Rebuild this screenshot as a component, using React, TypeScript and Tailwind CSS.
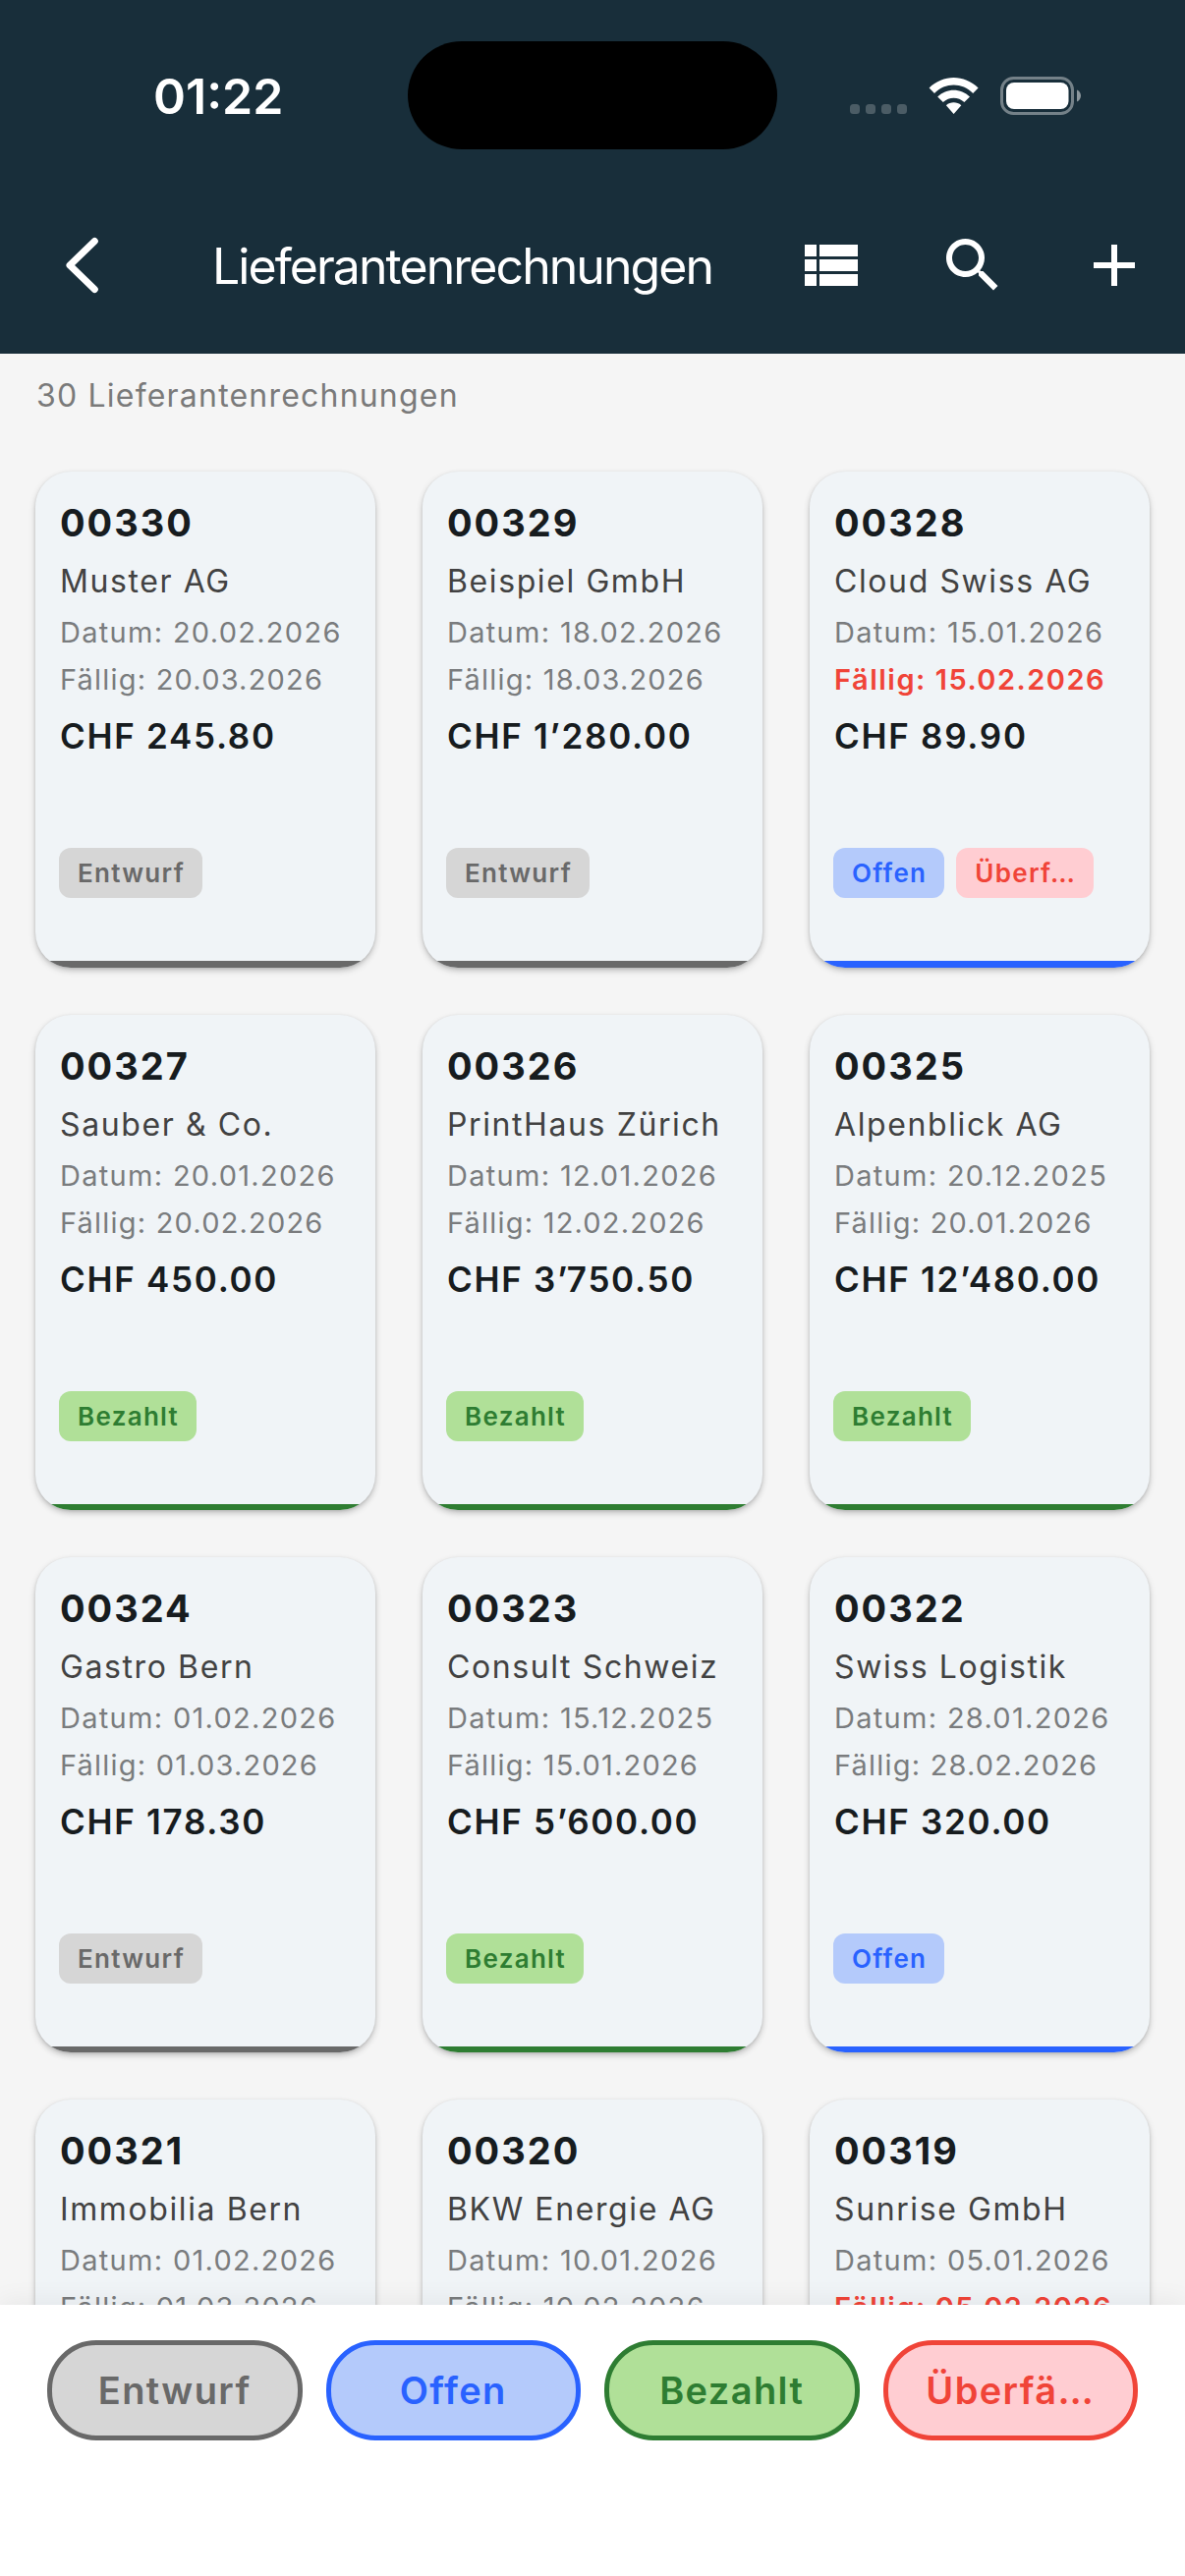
import { cva } from "class-variance-authority";
import { clsx } from "clsx";

type Status = "draft" | "open" | "paid" | "overdue";

type Invoice = {
	number: string;
	supplier: string;
	date: string;
	due: string;
	amount: string;
	status: Status;
	overdue?: boolean;
};

const INVOICES: Invoice[] = [
	{ number: "00330", supplier: "Muster AG", date: "20.02.2026", due: "20.03.2026", amount: "245.80", status: "draft" },
	{ number: "00329", supplier: "Beispiel GmbH", date: "18.02.2026", due: "18.03.2026", amount: "1’280.00", status: "draft" },
	{ number: "00328", supplier: "Cloud Swiss AG", date: "15.01.2026", due: "15.02.2026", amount: "89.90", status: "open", overdue: true },
	{ number: "00327", supplier: "Sauber & Co.", date: "20.01.2026", due: "20.02.2026", amount: "450.00", status: "paid" },
	{ number: "00326", supplier: "PrintHaus Zürich", date: "12.01.2026", due: "12.02.2026", amount: "3’750.50", status: "paid" },
	{ number: "00325", supplier: "Alpenblick AG", date: "20.12.2025", due: "20.01.2026", amount: "12’480.00", status: "paid" },
	{ number: "00324", supplier: "Gastro Bern", date: "01.02.2026", due: "01.03.2026", amount: "178.30", status: "draft" },
	{ number: "00323", supplier: "Consult Schweiz", date: "15.12.2025", due: "15.01.2026", amount: "5’600.00", status: "paid" },
	{ number: "00322", supplier: "Swiss Logistik", date: "28.01.2026", due: "28.02.2026", amount: "320.00", status: "open" },
	{ number: "00321", supplier: "Immobilia Bern", date: "01.02.2026", due: "01.03.2026", amount: "1’850.00", status: "open" },
	{ number: "00320", supplier: "BKW Energie AG", date: "10.01.2026", due: "10.02.2026", amount: "412.60", status: "paid" },
	{ number: "00319", supplier: "Sunrise GmbH", date: "05.01.2026", due: "05.02.2026", amount: "129.00", status: "open", overdue: true },
];

const STATUS_LABELS: Record<Status, string> = {
	draft: "Entwurf",
	open: "Offen",
	paid: "Bezahlt",
	overdue: "Überf…",
};

const FILTERS: { status: Status; label: string }[] = [
	{ status: "draft", label: "Entwurf" },
	{ status: "open", label: "Offen" },
	{ status: "paid", label: "Bezahlt" },
	{ status: "overdue", label: "Überfä…" },
];

const badgeVariants = cva(
	"flex h-[51px] items-center rounded-xl pr-[18px] pl-[19px] text-[26px] font-semibold tracking-[1.3px] whitespace-nowrap",
	{
		variants: {
			status: {
				draft: "bg-[#d6d6d6] text-[#696969]",
				open: "bg-[#b4cafb] text-[#2962ff]",
				paid: "bg-[#b0e098] text-[#2e7d32]",
				overdue: "bg-[#ffcdd2] text-[#f04438]",
			},
		},
	},
);

const filterVariants = cva(
	"flex h-[102px] flex-1 items-center justify-center rounded-[50px] border-5 text-[38px] font-semibold tracking-[1.4px] whitespace-nowrap",
	{
		variants: {
			status: {
				draft: "border-[#696969] bg-[#d6d6d6] text-[#696969]",
				open: "border-[#2962ff] bg-[#b4cafb] text-[#2962ff]",
				paid: "border-[#2e7d32] bg-[#b0e098] text-[#2e7d32]",
				overdue: "border-[#f04438] bg-[#ffcdd2] text-[#f04438]",
			},
		},
	},
);

const barVariants = cva("h-[6.4px] w-full shrink-0", {
	variants: {
		status: {
			draft: "bg-[#696969]",
			open: "bg-[#2962ff]",
			paid: "bg-[#2e7d32]",
			overdue: "bg-[#f04438]",
		},
	},
});

const StatusBar = () => (
	<div className="flex h-[210px] items-start pl-[156px]">
		<div className="flex h-[196px] w-[259px] shrink-0 items-center text-[50px] font-semibold">
			01:22
		</div>
		<div className="mt-[42px] h-[110px] w-[376px] shrink-0 rounded-full bg-black" />
		<svg className="mt-[72px] ml-[74px] h-12 w-[236px] shrink-0" viewBox="865 72 236 48" fill="white">
			<g opacity="0.22">
				<rect x="865" y="106" width="10" height="10" rx="3.5" />
				<rect x="881" y="106" width="10" height="10" rx="3.5" />
				<rect x="897" y="106" width="10" height="10" rx="3.5" />
				<rect x="913" y="106" width="10" height="10" rx="3.5" />
			</g>
			<path d="M945.6 89.6C959.6 75.5 981.6 75.5 995.6 89.6L990.2 95C979.2 83.8 962 83.8 951 95Z" />
			<path d="M954.2 98.4C963.4 89.4 977.8 89.4 987 98.4L981.4 104C975.2 98.2 966 98.2 959.8 104Z" />
			<path d="M962.9 107.2C967.3 103.4 973.9 103.4 978.3 107.2L970.6 116Z" />
			<rect x="1019.5" y="79.5" width="72" height="36" rx="12" fill="none" stroke="white" strokeOpacity="0.4" strokeWidth="3" />
			<rect x="1024" y="84" width="63.5" height="27" rx="8" />
			<path d="M1096 91.5C1098.6 92.7 1100 95 1100 97.5S1098.6 102.3 1096 103.5Z" opacity="0.5" />
		</svg>
	</div>
);

const AppBar = () => (
	<div className="flex h-[120px] items-center pr-9 pl-[60px]">
		<button aria-label="Zurück" className="w-[156px] shrink-0">
			<svg className="h-[60px] w-12" viewBox="0 0 48 60" fill="none" stroke="white" strokeWidth="7" strokeLinecap="round" strokeLinejoin="round">
				<path d="M36.3 5.5L11 30L36.3 54.5" />
			</svg>
		</button>
		<h1 className="mt-0.5 flex-1 text-[50px] tracking-[-1.95px] whitespace-nowrap">
			Lieferantenrechnungen
		</h1>
		<div className="flex shrink-0 gap-[72px]">
			<button aria-label="Liste">
				<svg className="size-[72px]" viewBox="0 0 24 24" fill="white">
					<path d="M3 14h4v-4H3v4zm0 5h4v-4H3v4zM3 9h4V5H3v4zm5 5h13v-4H8v4zm0 5h13v-4H8v4zM8 5v4h13V5H8z" />
				</svg>
			</button>
			<button aria-label="Suchen">
				<svg className="size-[72px]" viewBox="0 0 24 24" fill="white">
					<path d="M15.5 14h-.79l-.28-.27C15.41 12.59 16 11.11 16 9.5 16 5.91 13.09 3 9.5 3S3 5.91 3 9.5 5.91 16 9.5 16c1.61 0 3.09-.59 4.23-1.57l.27.28v.79l5 4.99L20.49 19l-4.99-5zm-6 0C7.01 14 5 11.99 5 9.5S7.01 5 9.5 5 14 7.01 14 9.5 11.99 14 9.5 14z" />
				</svg>
			</button>
			<button aria-label="Hinzufügen">
				<svg className="size-[72px]" viewBox="0 0 24 24" fill="white">
					<path d="M19 13h-6v6h-2v-6H5v-2h6V5h2v6h6v2z" />
				</svg>
			</button>
		</div>
	</div>
);

const InvoiceCard = ({ invoice }: { invoice: Invoice }) => (
	<article className="flex h-[504.4px] flex-col overflow-hidden rounded-[36px] bg-[#f0f4f7] whitespace-nowrap shadow-[0_3px_6px_rgba(0,0,0,0.22),0_1px_3px_rgba(0,0,0,0.1)]">
		<div className="flex-1 px-6 pt-6">
			<div className="pl-px">
				<h2 className="text-[38px] leading-[57px] font-bold tracking-[2px] text-[#171c1f]">
					{invoice.number}
				</h2>
				<p className="mt-[7px] text-[32px] leading-[48px] tracking-[1.6px] text-[#424242]">
					{invoice.supplier}
				</p>
				<p className="mt-[5px] text-[29px] leading-[46px] tracking-[1.3px] text-[#7a7c7e]">
					Datum: {invoice.date}
				</p>
				<p
					className={clsx(
						"mt-0.5 text-[29px] leading-[46px]",
						invoice.overdue
							? "font-semibold tracking-[1.5px] text-[#f04438]"
							: "tracking-[1.2px] text-[#7a7c7e]",
					)}
				>
					Fällig: {invoice.due}
				</p>
				<p className="mt-[7px] text-[35px] leading-[54px] font-semibold tracking-[1.7px] text-[#171c1f]">
					CHF {invoice.amount}
				</p>
			</div>
			<div className="mt-[87px] flex gap-3">
				<span className={badgeVariants({ status: invoice.status })}>
					{STATUS_LABELS[invoice.status]}
				</span>
				{invoice.overdue && (
					<span className={badgeVariants({ status: "overdue" })}>
						{STATUS_LABELS.overdue}
					</span>
				)}
			</div>
		</div>
		<div className={barVariants({ status: invoice.status })} />
	</article>
);

const App = () => (
	<div className="flex h-[2622px] w-[1206px] flex-col overflow-hidden bg-[#f5f5f5] font-['Inter','Liberation_Sans',sans-serif]">
		<header className="h-[360px] shrink-0 bg-[#182e3a] text-white">
			<StatusBar />
			<AppBar />
		</header>

		<main className="min-h-0 flex-1 overflow-hidden px-9">
			<p className="pt-[19px] pl-px text-[32px] leading-[48px] tracking-[1.2px] text-[#7a7a7a]">
				30 Lieferantenrechnungen
			</p>
			<div className="mt-[53.2px] grid grid-cols-3 gap-12">
				{INVOICES.map((invoice) => (
					<InvoiceCard key={invoice.number} invoice={invoice} />
				))}
			</div>
		</main>

		<footer className="z-10 flex h-[276px] shrink-0 gap-6 bg-white px-12 pt-9 shadow-[0_-4px_24px_rgba(0,0,0,0.06)]">
			{FILTERS.map(({ status, label }) => (
				<button key={status} className={filterVariants({ status })}>
					{label}
				</button>
			))}
		</footer>
	</div>
);

export default App;
